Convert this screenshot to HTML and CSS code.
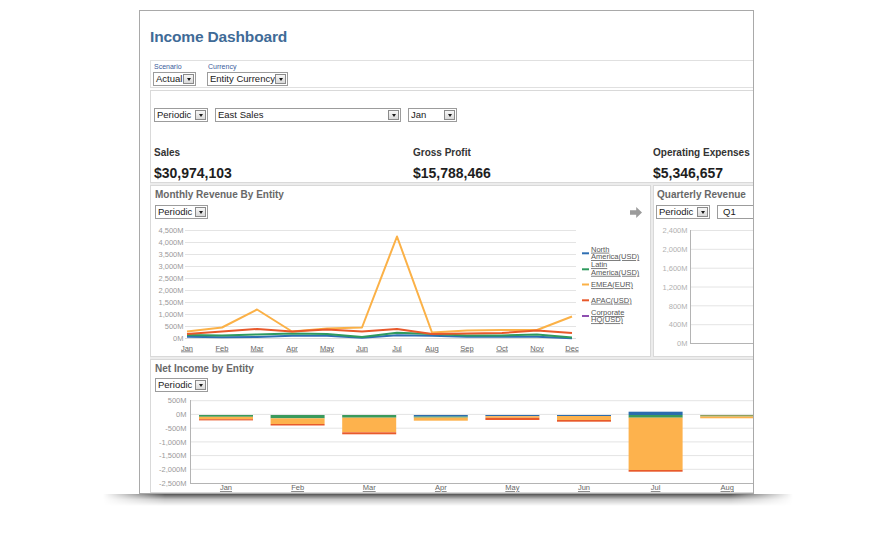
FILE: index.html
```html
<!DOCTYPE html>
<html lang="en">
<head>
<meta charset="utf-8">
<title>Income Dashboard</title>
<link rel="stylesheet" href="styles.css">
</head>
<body>
<div class="stage">
  <div class="card">
    <div class="inner">
      <h1 class="title">Income Dashboard</h1>

      <div class="filterbar">
        <div class="fgroup">
          <div class="flabel">Scenario</div>
          <div class="sel w-actual"><span class="sel-text">Actual</span><span class="sel-btn"></span></div>
        </div>
        <div class="fgroup">
          <div class="flabel">Currency</div>
          <div class="sel w-currency"><span class="sel-text">Entity Currency</span><span class="sel-btn"></span></div>
        </div>
      </div>

      <div class="panels">
        <section class="panel kpi-panel">
          <div class="sel-row">
            <div class="sel w-periodic"><span class="sel-text">Periodic</span><span class="sel-btn"></span></div>
            <div class="sel w-east"><span class="sel-text">East Sales</span><span class="sel-btn"></span></div>
            <div class="sel w-jan"><span class="sel-text">Jan</span><span class="sel-btn"></span></div>
          </div>
          <div class="kpis">
            <div class="kpi"><div class="kpi-label">Sales</div><div class="kpi-value">$30,974,103</div></div>
            <div class="kpi"><div class="kpi-label">Gross Profit</div><div class="kpi-value">$15,788,466</div></div>
            <div class="kpi"><div class="kpi-label">Operating Expenses</div><div class="kpi-value">$5,346,657</div></div>
          </div>
        </section>

        <div class="chart-row">
          <section class="panel chart monthly">
            <h2 class="chart-title">Monthly Revenue By Entity</h2>
            <div class="chart-tools">
              <div class="sel w-cperiodic"><span class="sel-text">Periodic</span><span class="sel-btn"></span></div>
              <svg class="arrow" width="12" height="11" viewBox="0 0 12 11"><path d="M0 3.3h6.2V0L12 5.5 6.2 11V7.7H0z"/></svg>
            </div>
            <svg class="plot" width="499" height="137" viewBox="151 219 499 137">
              <g class="grid">
                <line x1="185" x2="576" y1="230.5" y2="230.5"/>
                <line x1="185" x2="576" y1="242.5" y2="242.5"/>
                <line x1="185" x2="576" y1="254.5" y2="254.5"/>
                <line x1="185" x2="576" y1="266.5" y2="266.5"/>
                <line x1="185" x2="576" y1="278.5" y2="278.5"/>
                <line x1="185" x2="576" y1="290.5" y2="290.5"/>
                <line x1="185" x2="576" y1="302.5" y2="302.5"/>
                <line x1="185" x2="576" y1="314.5" y2="314.5"/>
                <line x1="185" x2="576" y1="326.5" y2="326.5"/>
                <line class="base" x1="185" x2="576" y1="338.5" y2="338.5"/>
              </g>
              <g class="ylab">
                <text x="183.5" y="233.3">4,500M</text>
                <text x="183.5" y="245.3">4,000M</text>
                <text x="183.5" y="257.3">3,500M</text>
                <text x="183.5" y="269.3">3,000M</text>
                <text x="183.5" y="281.3">2,500M</text>
                <text x="183.5" y="293.3">2,000M</text>
                <text x="183.5" y="305.3">1,500M</text>
                <text x="183.5" y="317.3">1,000M</text>
                <text x="183.5" y="329.3">500M</text>
                <text x="183.5" y="341.3">0M</text>
              </g>
              <g class="xlab">
                <text x="187" y="350.5">Jan</text>
                <text x="222" y="350.5">Feb</text>
                <text x="257" y="350.5">Mar</text>
                <text x="292" y="350.5">Apr</text>
                <text x="327" y="350.5">May</text>
                <text x="362" y="350.5">Jun</text>
                <text x="397" y="350.5">Jul</text>
                <text x="432" y="350.5">Aug</text>
                <text x="467" y="350.5">Sep</text>
                <text x="502" y="350.5">Oct</text>
                <text x="537" y="350.5">Nov</text>
                <text x="572" y="350.5">Dec</text>
              </g>
              <polyline class="ln ln-blue" points="187,336.7 222,337.3 257,337 292,335.8 327,335.8 362,337.7 397,335.2 432,335.8 467,336.7 502,336.7 537,336.7 572,338.3"/>
              <polyline class="ln ln-green" points="187,335 222,335.5 257,334.5 292,333.5 327,334 362,337 397,332.7 432,334 467,335.5 502,335.5 537,334.5 572,337.5"/>
              <polyline class="ln ln-orange" points="187,331.5 222,327.5 257,309.5 292,331.5 327,328.5 362,327.5 397,236.5 432,332.5 467,330.5 502,330 537,330 572,316.5"/>
              <polyline class="ln ln-red" points="187,334 222,331.5 257,329 292,331.5 327,329.5 362,331.5 397,329 432,334 467,333.5 502,333 537,330.5 572,333"/>
              <g class="legend">
                <line class="lg lg-blue" x1="582" x2="589" y1="253.3" y2="253.3"/>
                <text class="leg" x="591" y="251.7">North</text>
                <text class="leg" x="591" y="259">America(USD)</text>
                <line class="lg lg-green" x1="582" x2="589" y1="269.3" y2="269.3"/>
                <text class="leg" x="591" y="267.3">Latin</text>
                <text class="leg" x="591" y="274.8">America(USD)</text>
                <line class="lg lg-orange" x1="582" x2="589" y1="284.5" y2="284.5"/>
                <text class="leg" x="591" y="287.3">EMEA(EUR)</text>
                <line class="lg lg-red" x1="582" x2="589" y1="300.3" y2="300.3"/>
                <text class="leg" x="591" y="302.7">APAC(USD)</text>
                <line class="lg lg-purple" x1="582" x2="589" y1="316" y2="316"/>
                <text class="leg" x="591" y="315">Corporate</text>
                <text class="leg" x="591" y="322.3">HQ(USD)</text>
              </g>
            </svg>
          </section>

          <section class="panel chart quarterly">
            <h2 class="chart-title">Quarterly Revenue</h2>
            <div class="chart-tools start">
              <div class="sel w-periodic"><span class="sel-text">Periodic</span><span class="sel-btn"></span></div>
              <div class="sel w-q1"><span class="sel-text q1">Q1</span><span class="sel-btn"></span></div>
            </div>
            <svg class="plot" width="203" height="137" viewBox="654 219 203 137">
              <g class="grid">
                <line x1="691" x2="857" y1="230.5" y2="230.5"/>
                <line x1="691" x2="857" y1="249.3" y2="249.3"/>
                <line x1="691" x2="857" y1="268.2" y2="268.2"/>
                <line x1="691" x2="857" y1="287" y2="287"/>
                <line x1="691" x2="857" y1="305.8" y2="305.8"/>
                <line x1="691" x2="857" y1="324.7" y2="324.7"/>
                <line class="axis" x1="690" x2="857" y1="343.5" y2="343.5"/>
                <line class="axis" x1="690.5" x2="690.5" y1="230" y2="344"/>
              </g>
              <g class="ylab light">
                <text x="687.5" y="233.2">2,400M</text>
                <text x="687.5" y="252">2,000M</text>
                <text x="687.5" y="270.9">1,600M</text>
                <text x="687.5" y="289.7">1,200M</text>
                <text x="687.5" y="308.5">800M</text>
                <text x="687.5" y="327.4">400M</text>
                <text x="687.5" y="346.2">0M</text>
              </g>
            </svg>
          </section>
        </div>

        <section class="panel chart netincome">
          <h2 class="chart-title">Net Income by Entity</h2>
          <div class="chart-tools start tight">
            <div class="sel w-cperiodic"><span class="sel-text">Periodic</span><span class="sel-btn"></span></div>
          </div>
          <svg class="plot" width="701" height="100" viewBox="151 392 701 100">
            <g class="grid">
              <line x1="191" x2="852" y1="400.7" y2="400.7"/>
              <line x1="191" x2="852" y1="414.4" y2="414.4"/>
              <line x1="191" x2="852" y1="428.2" y2="428.2"/>
              <line x1="191" x2="852" y1="441.9" y2="441.9"/>
              <line x1="191" x2="852" y1="455.6" y2="455.6"/>
              <line x1="191" x2="852" y1="469.3" y2="469.3"/>
              <line class="axis" x1="190" x2="852" y1="483.5" y2="483.5"/>
              <line class="axis" x1="190.5" x2="190.5" y1="400" y2="484"/>
            </g>
            <g class="ylab">
              <text x="186.5" y="403.4">500M</text>
              <text x="186.5" y="417.1">0M</text>
              <text x="186.5" y="430.9">-500M</text>
              <text x="186.5" y="444.6">-1,000M</text>
              <text x="186.5" y="458.3">-1,500M</text>
              <text x="186.5" y="472">-2,000M</text>
              <text x="186.5" y="485.7">-2,500M</text>
            </g>
            <g class="bars">
              <rect class="b-green" x="199" y="415" width="54" height="1.8"/>
              <rect class="b-orange" x="199" y="416.8" width="54" height="2.4"/>
              <rect class="b-red" x="199" y="419.2" width="54" height="1.2"/>

              <rect class="b-green" x="270.6" y="415" width="54" height="3.3"/>
              <rect class="b-orange" x="270.6" y="418.3" width="54" height="5.7"/>
              <rect class="b-red" x="270.6" y="424" width="54" height="1.5"/>

              <rect class="b-green" x="342.2" y="415" width="54" height="2.7"/>
              <rect class="b-orange" x="342.2" y="417.7" width="54" height="14.6"/>
              <rect class="b-red" x="342.2" y="432.3" width="54" height="2"/>

              <rect class="b-blue" x="413.8" y="415" width="54" height="1.6"/>
              <rect class="b-green" x="413.8" y="416.6" width="54" height="1"/>
              <rect class="b-orange" x="413.8" y="417.6" width="54" height="3.1"/>

              <rect class="b-blue" x="485.4" y="415" width="54" height="1.2"/>
              <rect class="b-orange" x="485.4" y="416.2" width="54" height="1.6"/>
              <rect class="b-red" x="485.4" y="417.8" width="54" height="2.2"/>

              <rect class="b-blue" x="557" y="415" width="54" height="1"/>
              <rect class="b-orange" x="557" y="416" width="54" height="4"/>
              <rect class="b-red" x="557" y="420" width="54" height="1.7"/>

              <rect class="b-blue" x="628.6" y="411.7" width="54" height="3.3"/>
              <rect class="b-green" x="628.6" y="415" width="54" height="2.7"/>
              <rect class="b-orange" x="628.6" y="417.7" width="54" height="52.3"/>
              <rect class="b-red" x="628.6" y="470" width="54" height="1.7"/>

              <rect class="b-khaki" x="700.2" y="415" width="54" height="1.6"/>
              <rect class="b-orange" x="700.2" y="416.6" width="54" height="1.7"/>
            </g>
            <g class="xlab">
              <text x="226" y="490">Jan</text>
              <text x="297.6" y="490">Feb</text>
              <text x="369.2" y="490">Mar</text>
              <text x="440.8" y="490">Apr</text>
              <text x="512.4" y="490">May</text>
              <text x="584" y="490">Jun</text>
              <text x="655.6" y="490">Jul</text>
              <text x="727.2" y="490">Aug</text>
            </g>
          </svg>
        </section>
      </div>
    </div>
  </div>
  <div class="paper-shadow"></div>
</div>
</body>
</html>
```

FILE: styles.css
```css
* {
  box-sizing: border-box;
  margin: 0;
  padding: 0;
}

html,
body {
  background: #ffffff;
}

body {
  width: 880px;
  height: 533px;
  overflow: hidden;
  font-family: "Liberation Sans", Arial, Helvetica, sans-serif;
  color: #222222;
}

.stage {
  padding: 10px 0 0 139px;
}

.card {
  width: 615px;
  height: 484px;
  border: 1px solid #a9a9a9;
  background: #ffffff;
  overflow: hidden;
}

.inner {
  width: 720px;
  padding-left: 10px;
}

.title {
  padding-top: 17px;
  font-size: 15.5px;
  line-height: 18px;
  font-weight: bold;
  color: #3f6b97;
  letter-spacing: -0.15px;
}

/* ---------- filter bar ---------- */
.filterbar {
  margin-top: 14px;
  height: 28px;
  width: 703px;
  border: 1px solid #e0e0e0;
  padding: 1px 0 0 2px;
  display: flex;
  gap: 11px;
}

.flabel {
  font-size: 7px;
  line-height: 10px;
  color: #3a5c9c;
  padding-left: 1px;
}

/* ---------- select widget ---------- */
.sel {
  display: flex;
  align-items: center;
  height: 14px;
  border: 1px solid #9c9c9c;
  background: #ffffff;
  padding-left: 2px;
  font-size: 9.5px;
  color: #1a1a1a;
}

.sel-text {
  flex: 1;
  white-space: nowrap;
  line-height: 12px;
}

.sel-text.q1 {
  padding-left: 3px;
}

.sel-btn {
  flex: none;
  width: 11px;
  height: 10px;
  margin-right: 1px;
  border: 1px solid #8a8a8a;
  background: linear-gradient(#f7f7f7, #d9d9d9);
  display: flex;
  align-items: center;
  justify-content: center;
}

.sel-btn::after {
  content: "";
  border-left: 2.5px solid transparent;
  border-right: 2.5px solid transparent;
  border-top: 3px solid #1a1a1a;
}

.w-actual { width: 43px; }
.w-currency { width: 81px; }
.w-periodic { width: 54px; }
.w-cperiodic { width: 53px; }
.w-east { width: 186px; }
.w-jan { width: 49px; }
.w-q1 { width: 70px; }

/* ---------- panels ---------- */
.panels {
  margin-top: 2px;
  width: 703px;
  display: flex;
  flex-direction: column;
  gap: 2px;
  background: #ececec;
}

.panel {
  background: #ffffff;
  border: 1px solid #d9d9d9;
}

.kpi-panel {
  height: 93px;
  padding: 17px 0 0 3px;
}

.sel-row {
  display: flex;
  gap: 7px;
}

.kpis {
  margin-top: 24.5px;
  display: grid;
  grid-template-columns: 259px 240px 200px;
}

.kpi-label {
  font-size: 10px;
  line-height: 12px;
  font-weight: bold;
  color: #333333;
}

.kpi-value {
  margin-top: 6px;
  font-size: 14px;
  line-height: 16px;
  font-weight: bold;
  color: #1e1e1e;
}

.chart-row {
  display: flex;
  gap: 2px;
  height: 172px;
}

.chart {
  padding-top: 3px;
  display: flex;
  flex-direction: column;
  overflow: hidden;
}

.monthly {
  width: 501px;
}

.quarterly {
  flex: 1;
}

.netincome {
  height: 134px;
}

.chart-title {
  padding-left: 4px;
  font-size: 10px;
  line-height: 12px;
  font-weight: bold;
  color: #686868;
  white-space: nowrap;
}

.quarterly .chart-title {
  padding-left: 3px;
}

.chart-tools {
  margin-top: 4px;
  padding: 0 8px 0 4px;
  display: flex;
  align-items: center;
  justify-content: space-between;
}

.chart-tools.start {
  justify-content: flex-start;
  gap: 7px;
  padding-left: 2px;
}

.netincome .chart-tools {
  padding-left: 4px;
}

.chart-tools.tight {
  margin-top: 3px;
}

.arrow {
  display: block;
  fill: #9b9b9b;
}

.plot {
  display: block;
  flex: none;
}

/* ---------- chart drawing ---------- */
.plot text {
  font-family: "Liberation Sans", Arial, Helvetica, sans-serif;
  font-size: 7.5px;
}

.grid line {
  stroke: #e4e4e4;
  stroke-width: 1;
}

.grid line.base {
  stroke: #dcdcdc;
}

.grid line.axis {
  stroke: #b4b4b4;
}

.ylab text {
  fill: #9a9a9a;
  text-anchor: end;
}

.ylab.light text {
  fill: #b0b0b0;
}

.xlab text {
  fill: #666666;
  text-anchor: middle;
  text-decoration: underline;
}

.leg {
  fill: #555555;
  text-decoration: underline;
}

.ln {
  fill: none;
  stroke-width: 2;
  stroke-linejoin: round;
}

.ln-blue { stroke: #2f6fb3; }
.ln-green { stroke: #2f9a5e; }
.ln-orange { stroke: #fbb147; }
.ln-red { stroke: #e8582b; }

.lg {
  stroke-width: 2;
}

.lg-blue { stroke: #2f6fb3; }
.lg-green { stroke: #2f9a5e; }
.lg-orange { stroke: #fbb147; }
.lg-red { stroke: #e8582b; }
.lg-purple { stroke: #8e4fb0; }

.b-blue { fill: #2b6cae; }
.b-green { fill: #3a9a5c; }
.b-orange { fill: #fdb24d; }
.b-red { fill: #e85a2b; }
.b-khaki { fill: #8fa15c; }

/* ---------- paper shadow under the card ---------- */
.paper-shadow {
  width: 690px;
  height: 12px;
  margin-left: -36px;
  background: linear-gradient(rgba(0, 0, 0, 0.68), rgba(0, 0, 0, 0.22) 45%, rgba(0, 0, 0, 0));
  -webkit-mask-image: linear-gradient(to right, transparent, #000 9%, #000 91%, transparent);
  mask-image: linear-gradient(to right, transparent, #000 9%, #000 91%, transparent);
}
```
